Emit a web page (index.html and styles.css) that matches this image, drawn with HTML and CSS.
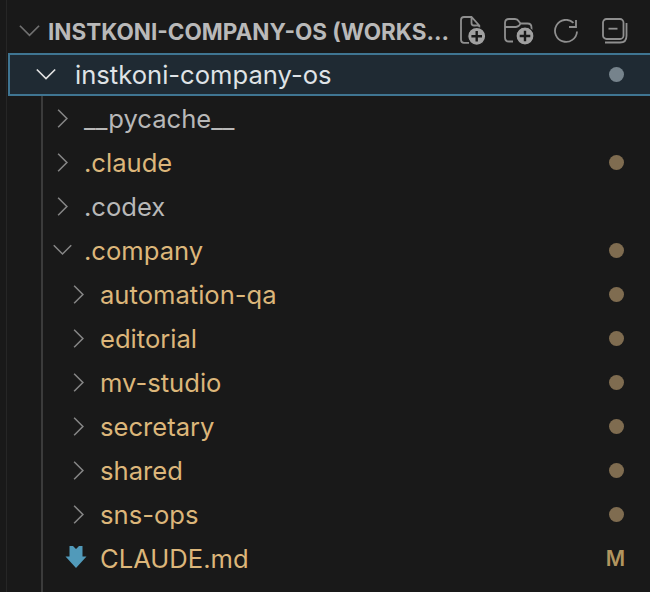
FILE: index.html
```html
<!DOCTYPE html>
<html lang="en">

<head>
    <meta charset="UTF-8">
    <meta name="viewport" content="width=device-width, initial-scale=1.0">
    <title>Explorer</title>
    <link rel="stylesheet" href="styles.css">
</head>

<body>
    <div class="explorer">
        <div class="header">
            <svg class="chev head-chev" viewBox="0 0 24 24"><path d="M2 6 L12 16 L22 6"/></svg>
            <div class="title">INSTKONI-COMPANY-OS (WORKS…</div>
            <div class="actions">
                <!-- new file -->
                <svg class="action new-file" viewBox="0 0 26 29"><path d="M9 26.800H4Q1 26.800 1 23.800V4Q1 1 4 1H11.500L19.300 9.500V13M11.500 1V7Q11.500 9.500 14 9.500H19.300"/><circle class="badge" cx="16.700" cy="20.300" r="9"/><path class="plus" d="M16.700 15V25.600M11.400 20.300H22"/></svg>
                <!-- new folder -->
                <svg class="action new-folder" viewBox="0 0 30 27"><path d="M9 23.500H5Q1 23.500 1 19.500V5Q1 1 5 1H11Q13.500 1 15 3.500L16.500 5.500H23.500Q27.500 5.500 27.500 9.500V12M16.500 5.500Q15 9 12 9H1"/><circle class="badge" cx="21" cy="18" r="9"/><path class="plus" d="M21 12.700V23.300M15.700 18H26.300"/></svg>
                <!-- refresh -->
                <svg class="action refresh" viewBox="0 0 24 24"><path d="M19.500 3.800A11 11 0 1 0 23 12.500M22 1V8H15"/></svg>
                <!-- collapse -->
                <svg class="action collapse" viewBox="0 0 26 26"><rect x="1" y="1" width="20.500" height="20" rx="3.500"/><path d="M6.500 10.700H15.500"/><path d="M24.500 5V18Q24.500 24.500 18 24.500H3"/></svg>
            </div>
        </div>

        <div class="tree">
            <div class="row selected">
                <svg class="chev root-chev" viewBox="0 0 24 24"><path d="M2 6 L12 16 L22 6"/></svg>
                <span class="name root-name">instkoni-company-os</span>
                <span class="dot dot-grey"></span>
            </div>
            <div class="children">
                <div class="row lvl1">
                    <svg class="chev" viewBox="0 0 24 24"><path d="M7 2 L17 12 L7 22"/></svg>
                    <span class="name plain">__pycache__</span>
                </div>
                <div class="row lvl1">
                    <svg class="chev" viewBox="0 0 24 24"><path d="M7 2 L17 12 L7 22"/></svg>
                    <span class="name">.claude</span>
                    <span class="dot"></span>
                </div>
                <div class="row lvl1">
                    <svg class="chev" viewBox="0 0 24 24"><path d="M7 2 L17 12 L7 22"/></svg>
                    <span class="name plain">.codex</span>
                </div>
                <div class="row lvl1">
                    <svg class="chev" viewBox="0 0 24 24"><path d="M2 6 L12 16 L22 6"/></svg>
                    <span class="name">.company</span>
                    <span class="dot"></span>
                </div>
                <div class="row lvl2">
                    <svg class="chev" viewBox="0 0 24 24"><path d="M7 2 L17 12 L7 22"/></svg>
                    <span class="name">automation-qa</span>
                    <span class="dot"></span>
                </div>
                <div class="row lvl2">
                    <svg class="chev" viewBox="0 0 24 24"><path d="M7 2 L17 12 L7 22"/></svg>
                    <span class="name">editorial</span>
                    <span class="dot"></span>
                </div>
                <div class="row lvl2">
                    <svg class="chev" viewBox="0 0 24 24"><path d="M7 2 L17 12 L7 22"/></svg>
                    <span class="name">mv-studio</span>
                    <span class="dot"></span>
                </div>
                <div class="row lvl2">
                    <svg class="chev" viewBox="0 0 24 24"><path d="M7 2 L17 12 L7 22"/></svg>
                    <span class="name">secretary</span>
                    <span class="dot"></span>
                </div>
                <div class="row lvl2">
                    <svg class="chev" viewBox="0 0 24 24"><path d="M7 2 L17 12 L7 22"/></svg>
                    <span class="name">shared</span>
                    <span class="dot"></span>
                </div>
                <div class="row lvl2">
                    <svg class="chev" viewBox="0 0 24 24"><path d="M7 2 L17 12 L7 22"/></svg>
                    <span class="name">sns-ops</span>
                    <span class="dot"></span>
                </div>
                <div class="row lvl2">
                    <svg class="file-icon" viewBox="0 0 22 24"><path d="M4.500 0H8L11 3L14 0H17.500V10.500H21.500L11 22L0.500 10.500H4.500Z"/></svg>
                    <span class="name">CLAUDE.md</span>
                    <span class="modified">M</span>
                </div>
            </div>
        </div>
    </div>
</body>

</html>
```

FILE: styles.css
```css
body {
    margin: 0;
    background-color: #191919;
    font-family: 'Inter', 'Liberation Sans', sans-serif;
    overflow: hidden;
}

.explorer {
    height: 592px;
    margin-left: 6px;
    border-left: 1px solid #262626;
    display: flex;
    flex-direction: column;
}

.header {
    height: 53px;
    padding-top: 9px;
    display: flex;
    align-items: center;
    box-sizing: border-box;
    flex: none;
}

.chev {
    width: 21px;
    height: 21px;
    fill: none;
    stroke: #858585;
    stroke-width: 1.8;
    flex: none;
}

.head-chev {
    width: 23px;
    height: 23px;
    margin-left: 11px;
    stroke: #707070;
}

.title {
    margin-left: 7px;
    width: 402px;
    font-size: 22.5px;
    font-weight: 700;
    color: #b9b9b9;
    white-space: nowrap;
    flex: none;
}

.actions {
    margin-left: 10px;
    display: flex;
    align-items: center;
}

.action {
    fill: none;
    stroke: #8f8f8f;
    stroke-width: 1.8;
    flex: none;
}

.action .badge {
    fill: #a0a0a0;
    stroke: #191919;
    stroke-width: 1.2;
}

.action .plus {
    stroke: #191919;
    stroke-width: 2.4;
}

.new-file {
    width: 26px;
    height: 29px;
    margin-top: -1px;
}

.new-folder {
    width: 30px;
    height: 27px;
    margin-left: 18px;
}

.refresh {
    width: 24px;
    height: 24px;
    margin-left: 20px;
}

.collapse {
    width: 26px;
    height: 26px;
    margin-left: 24px;
}

.tree {
    flex: 1;
    display: flex;
    flex-direction: column;
}

.row {
    height: 44px;
    display: flex;
    align-items: center;
    box-sizing: border-box;
    flex: none;
}

.selected {
    height: 43px;
    margin-left: 1px;
    background-color: #1f2a33;
    border: 2px solid #3f7592;
    border-right: none;
}

.selected .root-chev {
    width: 22px;
    height: 22px;
    margin-left: 25px;
    stroke: #e2e2e2;
}

.children {
    flex: 1;
    margin-left: 34px;
    border-left: 2px solid #3b3b3b;
}

.name {
    font-size: 25.6px;
    color: #dcb67a;
    white-space: nowrap;
}

.selected .root-name {
    margin-left: 18px;
    color: #dfe3e6;
}

.name.plain {
    color: #b8b8b8;
}

.lvl1 .chev {
    margin-left: 9px;
}

.lvl1 .name {
    margin-left: 11px;
}

.lvl2 .chev {
    margin-left: 25px;
}

.lvl2 .name {
    margin-left: 11px;
}

.file-icon {
    width: 22px;
    height: 24px;
    margin-left: 22px;
    fill: #519aba;
    flex: none;
}

.lvl2 .file-icon + .name {
    margin-left: 13px;
}

.dot {
    width: 15px;
    height: 15px;
    border-radius: 50%;
    background-color: #7f6c50;
    margin-left: auto;
    margin-right: 26px;
    flex: none;
}

.dot-grey {
    background-color: #76838c;
}

.modified {
    margin-left: auto;
    margin-right: 25px;
    font-size: 21px;
    font-weight: 600;
    color: #b2955f;
}
```
